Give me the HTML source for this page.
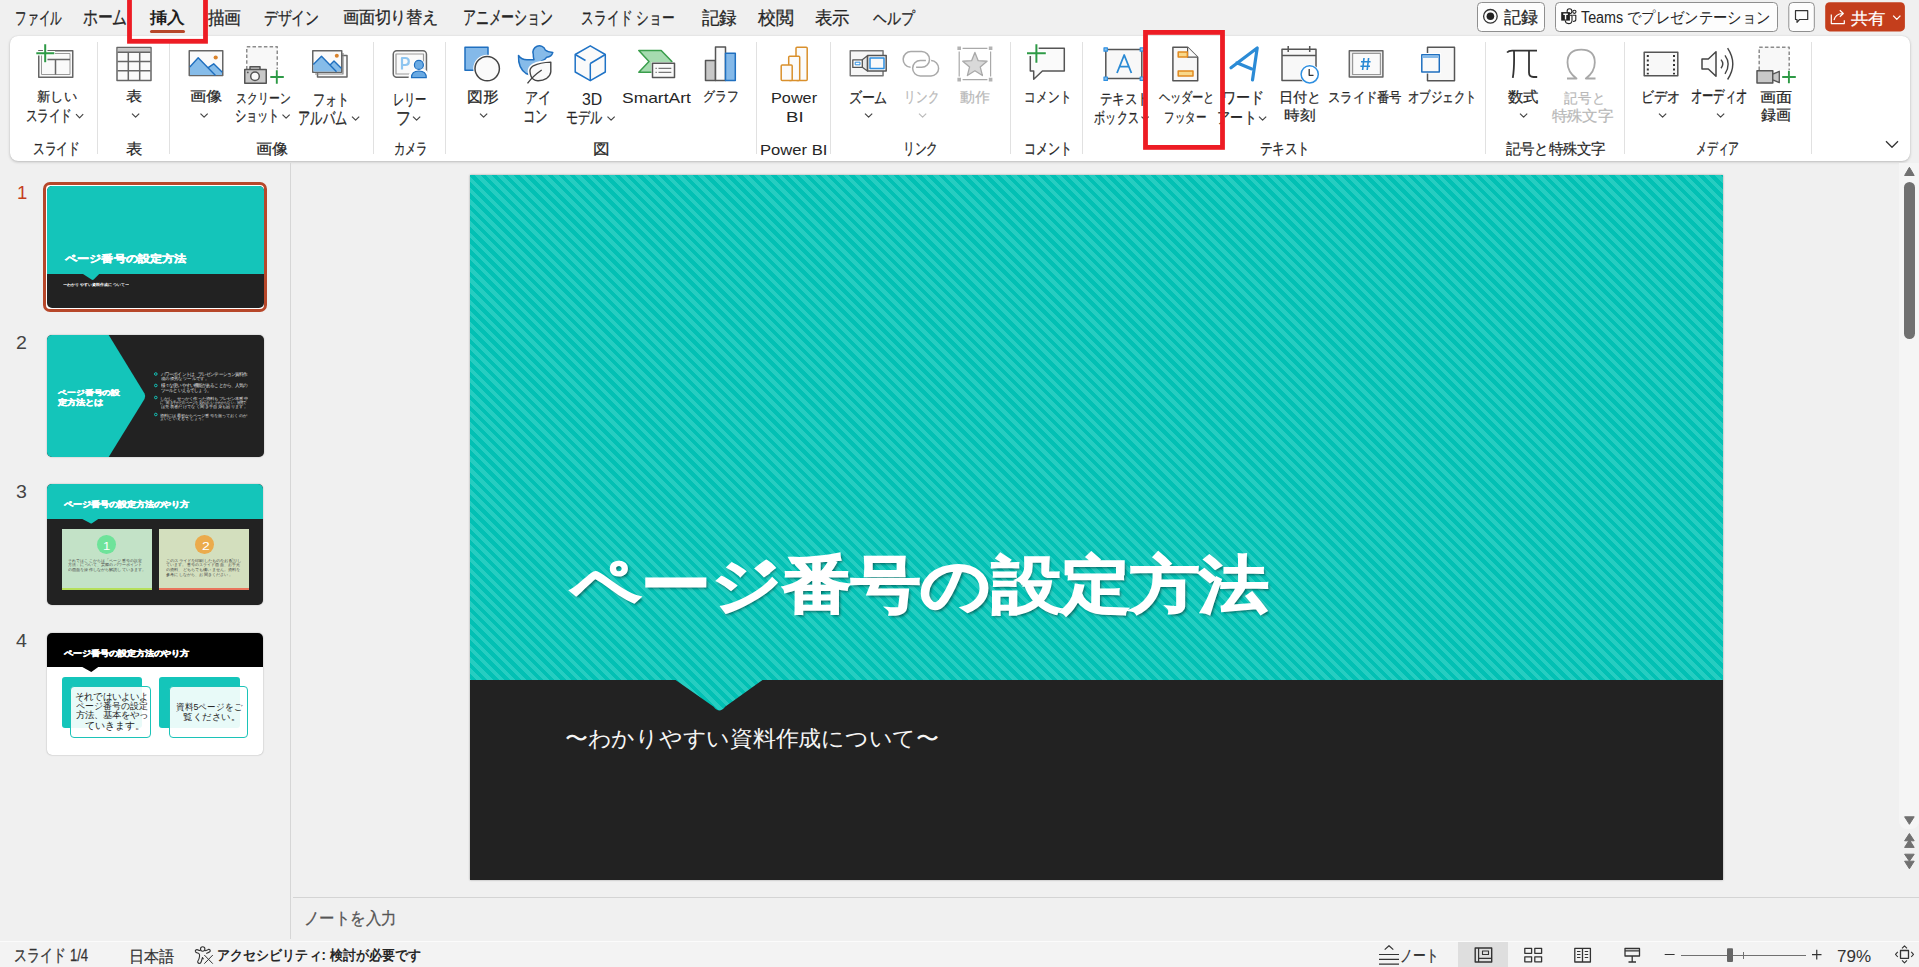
<!DOCTYPE html>
<html lang="ja"><head><meta charset="utf-8"><title>PowerPoint</title>
<style>
html,body{margin:0;padding:0;}
body{width:1919px;height:967px;overflow:hidden;background:#f0f0f0;position:relative;font-family:"Liberation Sans",sans-serif;}
.t{position:absolute;white-space:nowrap;line-height:1;transform-origin:0 0;}
.u{-webkit-text-stroke:0.25px currentColor;}
.a{position:absolute;}
svg.a{overflow:visible;}
</style></head><body>
<!-- ribbon panel -->
<div class="a" style="left:10px;top:36px;width:1900px;height:125px;background:#fff;border-radius:8px;box-shadow:0 1px 3px rgba(0,0,0,.22),0 0 1px rgba(0,0,0,.12);"></div>
<!-- tab underline -->
<div class="a" style="left:150px;top:30px;width:35px;height:3px;border-radius:2px;background:#b7472a;"></div>
<!-- ribbon separators -->
<div class="a" style="left:97px;top:42px;width:1px;height:112px;background:#e1e1e1;"></div><div class="a" style="left:169px;top:42px;width:1px;height:112px;background:#e1e1e1;"></div><div class="a" style="left:373px;top:42px;width:1px;height:112px;background:#e1e1e1;"></div><div class="a" style="left:445px;top:42px;width:1px;height:112px;background:#e1e1e1;"></div><div class="a" style="left:756px;top:42px;width:1px;height:112px;background:#e1e1e1;"></div><div class="a" style="left:830px;top:42px;width:1px;height:112px;background:#e1e1e1;"></div><div class="a" style="left:1010px;top:42px;width:1px;height:112px;background:#e1e1e1;"></div><div class="a" style="left:1082px;top:42px;width:1px;height:112px;background:#e1e1e1;"></div><div class="a" style="left:1485px;top:42px;width:1px;height:112px;background:#e1e1e1;"></div><div class="a" style="left:1624px;top:42px;width:1px;height:112px;background:#e1e1e1;"></div><div class="a" style="left:1811px;top:42px;width:1px;height:112px;background:#e1e1e1;"></div>
<!-- left pane separator -->
<div class="a" style="left:290px;top:163px;width:1px;height:776px;background:#d6d6d6;"></div>
<!-- notes separator -->
<div class="a" style="left:293px;top:897px;width:1626px;height:1px;background:#d4d4d4;"></div>
<!-- status bar -->
<div class="a" style="left:0;top:941px;width:1919px;height:1px;background:#fbfbfb;"></div>
<div class="a" style="left:0;top:942px;width:1919px;height:25px;background:#f3f3f3;"></div>
<div class="a" style="left:1458px;top:942px;width:50px;height:25px;background:#dedede;"></div>
<!-- scrollbar track -->
<div class="a" style="left:1899px;top:163px;width:20px;height:666px;background:#f5f5f5;border-radius:0 0 8px 8px;"></div>
<div class="a" style="left:1904px;top:182px;width:10.5px;height:156.5px;background:#707070;border-radius:6px;"></div>
<!-- main slide -->
<div class="a" style="left:470px;top:175px;width:1253px;height:705px;box-shadow:0 0 2px rgba(0,0,0,.35);background:repeating-linear-gradient(45deg,#02c0b4 0px,#02c0b4 3.95px,#26cdc1 3.95px,#26cdc1 7.9px);"></div>
<svg class="a" style="left:470px;top:175px" width="1253" height="705" viewBox="0 0 1253 705">
<path d="M0,505 H205.6 L243.7,531.8 Q249.4,539.4 255.1,531.8 L292.5,505 H1253 V705 H0 Z" fill="#222222"/>
</svg>
<!-- thumb 1 selected -->
<div class="a" style="left:43px;top:182px;width:218px;height:124px;border:3px solid #b7472a;border-radius:7px;background:#fff;"></div>
<div class="a" style="left:46.5px;top:185.5px;width:217px;height:122.5px;border-radius:5px;overflow:hidden;background:#222;">
  <div class="a" style="left:0;top:0;width:217px;height:88.4px;background:#14c5ba;"></div>
  <svg class="a" style="left:0;top:0" width="217" height="122"><path d="M36,88 L44.5,93.6 Q45.6,94.3 46.7,93.6 L52.2,88 Z" fill="#14c5ba"/></svg>
</div>
<!-- thumb 2 -->
<div class="a" style="left:46.5px;top:335px;width:217px;height:122px;border-radius:5px;overflow:hidden;background:#222;box-shadow:0 0 1.5px rgba(0,0,0,.35);">
  <svg class="a" style="left:0;top:0" width="217" height="122"><path d="M0,0 H61.7 L97.5,58.5 Q99,61.2 97.5,63.9 L61.7,122 H0 Z" fill="#14c5ba"/>
  <g fill="none" stroke="#14c5ba" stroke-width="1"><circle cx="108.8" cy="39" r="1.3"/><circle cx="108.8" cy="50.5" r="1.3"/><circle cx="108.8" cy="62.5" r="1.3"/><circle cx="108.8" cy="79.5" r="1.3"/></g></svg>
</div>
<!-- thumb 3 -->
<div class="a" style="left:46.9px;top:483.8px;width:216.1px;height:121.7px;border-radius:5px;overflow:hidden;background:#222;box-shadow:0 0 1.5px rgba(0,0,0,.35);">
  <div class="a" style="left:0;top:0;width:217px;height:35.1px;background:#14c5ba;"></div>
  <svg class="a" style="left:0;top:0" width="217" height="122"><path d="M35.3,35 L43.4,39.3 Q44.2,39.9 45,39.3 L51.3,35 Z" fill="#14c5ba"/></svg>
  <div class="a" style="left:15px;top:45.2px;width:90px;height:61.2px;background:#c3e2c7;"></div>
  <div class="a" style="left:15px;top:104.4px;width:90px;height:2px;background:#b5df5a;"></div>
  <div class="a" style="left:111.9px;top:45.2px;width:90.1px;height:61.2px;background:#d3dfbe;"></div>
  <div class="a" style="left:111.9px;top:104.4px;width:90.1px;height:2px;background:#e9745b;"></div>
  <div class="a" style="left:50.2px;top:51.3px;width:18.8px;height:18.8px;border-radius:50%;background:#6ee39a;"></div>
  <div class="a" style="left:148.2px;top:51.3px;width:18.8px;height:18.8px;border-radius:50%;background:#ebab4c;"></div>
</div>
<!-- thumb 4 -->
<div class="a" style="left:46.9px;top:632.8px;width:216.1px;height:122.4px;border-radius:5px;overflow:hidden;background:#fff;box-shadow:0 0 1.5px rgba(0,0,0,.4);">
  <div class="a" style="left:0;top:0;width:217px;height:34.1px;background:#000;"></div>
  <svg class="a" style="left:0;top:0" width="217" height="122"><path d="M35.3,34 L43.4,38.6 Q44.2,39.2 45,38.6 L51.3,34 Z" fill="#000"/></svg>
  <div class="a" style="left:15.3px;top:44.4px;width:79.6px;height:50.9px;border-radius:3px;background:#14c5ba;"></div>
  <div class="a" style="left:23.6px;top:53.5px;width:79px;height:49.5px;border-radius:4px;border:1px solid #1cc3b8;background:rgba(255,255,255,.9);"></div>
  <div class="a" style="left:112.3px;top:44.4px;width:80.6px;height:50.9px;border-radius:3px;background:#14c5ba;"></div>
  <div class="a" style="left:121.7px;top:53.5px;width:77.9px;height:49.5px;border-radius:4px;border:1px solid #1cc3b8;background:rgba(255,255,255,.9);"></div>
</div>

<svg class="a" style="left:0;top:0" width="1919" height="967" viewBox="0 0 1919 967">
<g fill="none" stroke-linejoin="round">
<!-- 1 new slide -->
<rect x="38.75" y="50.75" width="34" height="26.5" fill="#fafafa" stroke="#666" stroke-width="1.5"/>
<rect x="41.5" y="53.5" width="28.5" height="21" stroke="#999" stroke-width="1"/>
<path d="M45,59.5 H70 M55.5,59.5 V74.5" stroke="#666" stroke-width="1.5"/>
<path d="M45.2,43.5 V63 M35.5,53.2 H55" stroke="#fff" stroke-width="4.5"/>
<path d="M45.2,44.3 V62.3 M36.3,53.2 H54.3" stroke="#2e9a46" stroke-width="2"/>
<!-- 2 table -->
<rect x="117" y="47.5" width="34" height="33" fill="#fafafa" stroke="#666" stroke-width="1.5"/>
<rect x="117.75" y="48.25" width="32.5" height="4" fill="#c6c6c6"/>
<path d="M128.3,52.3 V80.5 M139.7,52.3 V80.5 M117.5,52.3 H150.5 M117.5,61.5 H150.5 M117.5,70.8 H150.5" stroke="#666" stroke-width="1.5"/>
<!-- 3 picture -->
<rect x="189.25" y="50.85" width="33.5" height="24.7" fill="#fafafa" stroke="#666" stroke-width="1.5"/>
<path d="M190,75 V67 L198.2,57.8 L207.5,67.8 L213.7,63.8 L222,72 V75 Z" fill="#86bce9"/>
<path d="M189.8,67 L198.2,57.8 L215.5,75.5 M207.8,67.8 L213.7,63.8 L222.3,72.3" stroke="#1f6fbf" stroke-width="1.4"/>
<circle cx="215.7" cy="57.5" r="2.1" fill="#d9822b"/>
<!-- 4 screenshot -->
<rect x="246.75" y="46.75" width="30.5" height="23" fill="#f8f8f8"/><path d="M246.75,69.5 V46.75 H277.25 V69.5" stroke="#8c8c8c" stroke-width="1.5" stroke-dasharray="3.5 2.2"/>
<path d="M250,69.5 V66.8 H260 V69.5" fill="#c8c8c8" stroke="#555" stroke-width="1.5"/>
<rect x="244.75" y="69.5" width="21.5" height="13.8" fill="#c8c8c8" stroke="#555" stroke-width="1.5"/>
<circle cx="255" cy="76.3" r="4.3" fill="#fafafa" stroke="#555" stroke-width="1.5"/>
<circle cx="247.8" cy="72.4" r="0.9" fill="#555"/>
<path d="M276.8,69.5 V84.5 M269.5,77 H284.5" stroke="#fff" stroke-width="4"/>
<path d="M276.8,70.3 V83.7 M270.3,77 H283.8" stroke="#2e9a46" stroke-width="1.9"/>
<!-- 5 photo album -->
<rect x="317.5" y="55.5" width="29.5" height="21.5" fill="#fafafa" stroke="#666" stroke-width="1.5"/>
<path d="M343,53 V74 H315" stroke="#888" stroke-width="1.2"/>
<rect x="312.75" y="50.75" width="29" height="21.5" fill="#fafafa" stroke="#666" stroke-width="1.5"/>
<path d="M313.5,71.5 V64.5 L321.5,56.3 L330,65 L334,61 L341,68 V71.5 Z" fill="#86bce9"/>
<path d="M313.3,64.5 L321.5,56.3 L336.5,71.8 M330,65 L334,61 L341.3,68.3" stroke="#1f6fbf" stroke-width="1.4"/>
<circle cx="336.8" cy="55.8" r="2" fill="#d9822b"/>
<!-- 6 cameo -->
<rect x="393.25" y="50.75" width="33.2" height="26.5" rx="3.5" fill="#fafafa" stroke="#666" stroke-width="1.5"/>
<rect x="396" y="54" width="27.5" height="20" stroke="#9a9a9a" stroke-width="1.2"/>
<path d="M402,69.6 V58 H405.3 Q408.8,58 408.8,61.5 Q408.8,65 405.3,65 H402" stroke="#8ec5f0" stroke-width="2.2"/>
<path d="M410,78.5 Q410,69.5 418.9,69.5 Q427.8,69.5 427.8,78.5" fill="#fff" stroke="#fff" stroke-width="3"/>
<circle cx="418.9" cy="64.9" r="6" fill="#fff"/>
<circle cx="418.9" cy="64.9" r="4.5" fill="#6aaae3" stroke="#1f6fbf" stroke-width="1.2"/>
<path d="M411.5,77.7 Q411.5,71 418.9,71 Q426.3,71 426.3,77.7 Z" fill="#6aaae3" stroke="#1f6fbf" stroke-width="1.2"/>
<!-- 7 shapes -->
<rect x="465" y="47.25" width="23" height="23" fill="#84b9e9" stroke="#1f6fbf" stroke-width="1.5"/>
<circle cx="487.2" cy="68.6" r="12.2" fill="#fff" stroke="#fff" stroke-width="3.5"/>
<circle cx="487.2" cy="68.6" r="12.2" fill="#fafafa" stroke="#444" stroke-width="1.5"/>
<!-- 8 icons -->
<path d="M518.5,55.5 Q521.5,59.8 527,59.8 H534 Q533.2,57.5 533.3,54.5 A6.3,6.3 0 0 1 545.3,50 Q547.5,52 552.8,52.5 Q551.5,56.8 546.8,57.2 Q545,60.2 541.5,61 Q547,62.5 548,66 L540,75 Q532,76.5 526,73.5 Q518,68 518.5,55.5 Z" fill="#86bbe9" stroke="#1f6fbf" stroke-width="1.5"/>
<path d="M550.8,62.1 Q540,62.5 533.3,65.8 Q529.5,68.5 530,71.7 Q530.5,77 533.3,79.2 Q535.5,81 538.3,80.8 Q543,80.5 546.7,78.3 Q550.5,75.5 550.8,71.7 Z" fill="#fafafa" stroke="#fff" stroke-width="4.5"/>
<path d="M550.8,62.1 Q540,62.5 533.3,65.8 Q529.5,68.5 530,71.7 Q530.5,77 533.3,79.2 Q535.5,81 538.3,80.8 Q543,80.5 546.7,78.3 Q550.5,75.5 550.8,71.7 Z" fill="#fafafa" stroke="#444" stroke-width="1.4"/>
<path d="M527.5,83.3 Q533,76 541.7,70" stroke="#444" stroke-width="1.4"/>
<!-- 9 3D -->
<path d="M590.3,45.8 L605.3,54.5 V72 L590.3,80.7 L575.2,72 V54.5 Z" fill="#fafafa" stroke="#1f73c6" stroke-width="1.5"/>
<path d="M575.2,54.5 L585.5,60.5 M590.3,63.5 V80.7 M590.3,63.5 L605.3,54.5" stroke="#1f73c6" stroke-width="1.5"/>
<!-- 10 smartart -->
<path d="M638.8,50.5 H661.2 L671.9,61.5 L661.2,72.3 H638.8 L649,61.5 Z" fill="#a6dbb0" stroke="#3a9e4c" stroke-width="1.5"/>
<rect x="651.5" y="62.2" width="24" height="16.3" fill="#fff"/>
<rect x="652.5" y="63.2" width="22" height="14.3" fill="#fafafa" stroke="#555" stroke-width="1.5"/>
<path d="M655.5,68.3 H656.8 M655.5,72.3 H656.8 M658.5,68.3 H671.3 M658.5,72.3 H671.3" stroke="#777" stroke-width="1.3"/>
<!-- 11 chart -->
<rect x="705.5" y="60.5" width="10" height="20" fill="#c8c8c8" stroke="#555" stroke-width="1.5"/>
<rect x="715.5" y="47" width="10" height="33.5" fill="#fafafa" stroke="#555" stroke-width="1.5"/>
<rect x="725.5" y="53.3" width="9.8" height="27.2" fill="#84b9e9" stroke="#1f6fbf" stroke-width="1.5"/>
<!-- 12 power bi -->
<rect x="796" y="47.2" width="11.2" height="33.3" rx="1" fill="#fbfbfb" stroke="#d9902c" stroke-width="1.5"/>
<rect x="788.7" y="56.2" width="11" height="24.3" rx="1" fill="#fbfbfb" stroke="#d9902c" stroke-width="1.5"/>
<rect x="781.2" y="64.9" width="11" height="15.6" rx="1" fill="#fbfbfb" stroke="#d9902c" stroke-width="1.5"/>
<!-- 13 zoom -->
<rect x="850.25" y="50.75" width="32.8" height="25" fill="#f6f6f6" stroke="#777" stroke-width="1.5"/>
<path d="M862.3,59.8 L867.4,55.8 V71 L862.3,67.3 Z" fill="#e8e8e8" stroke="#555" stroke-width="1.2"/>
<rect x="852.8" y="59.8" width="9.5" height="7.6" fill="#fff" stroke="#555" stroke-width="1.3"/>
<rect x="855.2" y="62.2" width="4.8" height="2.6" stroke="#2e8fe0" stroke-width="1"/>
<rect x="867.6" y="55.6" width="18.6" height="15.4" fill="#fafafa" stroke="#555" stroke-width="1.5"/>
<rect x="870" y="58" width="14" height="10.6" stroke="#2e8fe0" stroke-width="1.5"/>
<!-- 14 link -->
<path d="M910.6,67.2 A7.8,7.8 0 0 1 911.3,51.6 H921.7 A7.8,7.8 0 0 1 921.7,67.2 H916.1" stroke="#a9a9a9" stroke-width="1.5"/>
<path d="M925.9,60.6 H920.3 A7.65,7.65 0 0 0 920.3,75.9 H930.8 A7.65,7.65 0 0 0 931.1,60.6" stroke="#a9a9a9" stroke-width="1.5"/>
<!-- 15 action -->
<path d="M962.6,48.3 H987.4 M962.6,79.6 H987.4 M959.2,51.6 V76.5 M990.6,51.6 V76.5" stroke="#a9a9a9" stroke-width="1.2"/>
<path d="M957.4,46.4 h3.6 v3.6 h-3.6 Z M988.8,46.4 h3.6 v3.6 h-3.6 Z M957.4,77.8 h3.6 v3.6 h-3.6 Z M988.8,77.8 h3.6 v3.6 h-3.6 Z" fill="#b3b3b3"/>
<path d="M974.90,52.40 L978.19,60.67 L987.07,61.24 L980.23,66.93 L982.42,75.56 L974.90,70.80 L967.38,75.56 L969.57,66.93 L962.73,61.24 L971.61,60.67 Z" fill="#d9d9d9" stroke="#a9a9a9" stroke-width="1.3"/>
<!-- 16 comment -->
<path d="M1030.3,56 V71 H1033.7 V79.2 L1042.4,71 H1064.3 V48.3 H1038" fill="#fafafa" stroke="#555" stroke-width="1.5"/>
<path d="M1036.4,43.5 V63.5 M1026.2,53.2 H1046.6" stroke="#fff" stroke-width="4.5"/>
<path d="M1036.4,44.3 V62.7 M1027,53.2 H1045.8" stroke="#2e9a46" stroke-width="2"/>
<!-- 17 textbox -->
<rect x="1105.8" y="49.6" width="36" height="29" fill="#f8f8f8" stroke="#555" stroke-width="1.5"/>
<path d="M1117,73 L1124.2,55 L1131.4,73 M1119.6,66.7 H1128.8" stroke="#2a8ad4" stroke-width="1.8"/>
<g fill="#8cc4f0" stroke="#2e8fe0" stroke-width="1.2"><rect x="1104" y="47.8" width="3.4" height="3.4"/><rect x="1140.2" y="47.8" width="3.4" height="3.4"/><rect x="1104" y="77" width="3.4" height="3.4"/><rect x="1140.2" y="77" width="3.4" height="3.4"/></g>
<!-- 18 header footer -->
<path d="M1172.9,47.3 H1187.6 L1197.7,57.2 V80.7 H1172.9 Z" fill="#f8f8f8" stroke="#555" stroke-width="1.5"/>
<path d="M1187.6,47.3 V57.2 H1197.7" fill="#fafafa" stroke="#555" stroke-width="1.2"/>
<rect x="1178.2" y="52" width="9.2" height="5" fill="#f8d88a" stroke="#e0891f" stroke-width="1.5"/>
<rect x="1178.2" y="70.9" width="14.8" height="5" fill="#f8d88a" stroke="#e0891f" stroke-width="1.5"/>
<!-- 19 wordart -->
<path d="M1231,67.8 L1257.2,48 L1252.5,80 M1236.8,62.8 L1251.2,68.8" stroke="#2b8bd6" stroke-width="3.2" stroke-linecap="round"/>
<!-- 20 date -->
<rect x="1282" y="49.2" width="34" height="31.2" fill="#f8f8f8" stroke="#555" stroke-width="1.5"/>
<path d="M1282,55.5 H1316 M1288.2,46 V52 M1309.7,46 V52" stroke="#555" stroke-width="1.5"/>
<circle cx="1309.7" cy="74.3" r="10" fill="#fff"/>
<circle cx="1309.7" cy="74.3" r="8.6" fill="#fff" stroke="#2e8fe0" stroke-width="1.5"/>
<path d="M1309.2,69 V75.3 H1313.5" stroke="#333" stroke-width="1.3"/>
<!-- 21 slide number -->
<rect x="1349.3" y="50.8" width="33.6" height="26.2" fill="#eeeeee" stroke="#666" stroke-width="1.5"/>
<rect x="1352.6" y="53.3" width="27.8" height="21.2" fill="#fafafa" stroke="#999" stroke-width="1.2"/>
<path d="M1364,58 L1362.6,70 M1368.6,58 L1367.2,70 M1361,61.8 H1370.6 M1360.4,66.2 H1370" stroke="#2a8ad4" stroke-width="1.6"/>
<!-- 22 object -->
<rect x="1427.5" y="47.2" width="27" height="33.5" fill="#f8f8f8" stroke="#555" stroke-width="1.5"/>
<rect x="1420" y="53" width="21" height="20.5" fill="#fff"/>
<rect x="1421.8" y="54.7" width="17.5" height="17.3" fill="#fafafa" stroke="#1f6fbf" stroke-width="1.5"/>
<rect x="1422.5" y="55.4" width="16" height="2.6" fill="#84b9e9"/>
<!-- 23 pi -->
<path d="M1507,52.5 Q1509,50.3 1513,50.6 H1537 M1514,51 Q1514.5,68 1512.8,77.8 M1529,51 V72.5 Q1529,77 1533.5,77 H1537.2" stroke="#333" stroke-width="1.8"/>
<!-- 24 omega -->
<path d="M1567,78.5 H1576.5 Q1567.5,72 1567.5,62.5 Q1567.5,49.6 1581.2,49.6 Q1594.8,49.6 1594.8,62.5 Q1594.8,72 1585.8,78.5 H1595.5" stroke="#a8a8a8" stroke-width="1.8"/>
<!-- 25 video -->
<rect x="1644.2" y="52.2" width="33.6" height="23.6" fill="#f8f8f8" stroke="#555" stroke-width="1.5"/>

<g fill="#333"><rect x="1646.8" y="55" width="2" height="2"/><rect x="1646.8" y="59.5" width="2" height="2"/><rect x="1646.8" y="64" width="2" height="2"/><rect x="1646.8" y="68.5" width="2" height="2"/><rect x="1646.8" y="72.8" width="2" height="1.6"/>
<rect x="1673" y="55" width="2" height="2"/><rect x="1673" y="59.5" width="2" height="2"/><rect x="1673" y="64" width="2" height="2"/><rect x="1673" y="68.5" width="2" height="2"/><rect x="1673" y="72.8" width="2" height="1.6"/></g>
<!-- 26 audio -->
<path d="M1702,59 H1708.3 L1716,51.8 V76.2 L1708.3,69 H1702 Z" fill="#fafafa" stroke="#444" stroke-width="1.5"/>
<path d="M1721,59.6 Q1724.6,63.8 1721,68.2 M1725,55.4 Q1731.4,64.2 1725,73.8 M1727.6,48.2 Q1738,64 1727.6,79.5" stroke="#444" stroke-width="1.4"/>
<!-- 27 screen recording -->
<rect x="1759.2" y="47.2" width="30" height="23" fill="#f8f8f8"/><path d="M1759.2,70 V47.2 H1789.2 V70" stroke="#8c8c8c" stroke-width="1.5" stroke-dasharray="3.5 2.2"/>
<rect x="1757" y="70.8" width="15.8" height="12.3" fill="#c8c8c8" stroke="#555" stroke-width="1.5"/>
<path d="M1772.8,74.2 L1779.3,71.3 V82.7 L1772.8,79.8 Z" fill="#c8c8c8" stroke="#555" stroke-width="1.3"/>
<path d="M1788.9,70 V84 M1781.5,77 H1796.5" stroke="#fff" stroke-width="4"/>
<path d="M1788.9,70.7 V83.3 M1782.2,77 H1795.8" stroke="#2e9a46" stroke-width="1.9"/>
<!-- chevrons -->
<g stroke="#444" stroke-width="1.2">
<path d="M76,114.2 l3.6,3.6 l3.6,-3.6"/>
<path d="M132,113.6 l3.6,3.6 l3.6,-3.6"/>
<path d="M200.5,113.6 l3.6,3.6 l3.6,-3.6"/>
<path d="M282.5,114.6 l3.6,3.6 l3.6,-3.6"/>
<path d="M352,116.6 l3.6,3.6 l3.6,-3.6"/>
<path d="M413,116.6 l3.6,3.6 l3.6,-3.6"/>
<path d="M480,113.6 l3.6,3.6 l3.6,-3.6"/>
<path d="M607.5,116.6 l3.6,3.6 l3.6,-3.6"/>
<path d="M865,113.6 l3.6,3.6 l3.6,-3.6"/>
<path d="M1141.5,116.6 l3.6,3.6 l3.6,-3.6"/>
<path d="M1259,116.6 l3.6,3.6 l3.6,-3.6"/>
<path d="M1520,113.6 l3.6,3.6 l3.6,-3.6"/>
<path d="M1659,113.6 l3.6,3.6 l3.6,-3.6"/>
<path d="M1717,113.6 l3.6,3.6 l3.6,-3.6"/>
<path d="M1886,141.2 l6,6 l6,-6" stroke="#333" stroke-width="1.3"/>
</g>
<path d="M919,113.6 l3.6,3.6 l3.6,-3.6" stroke="#bbb" stroke-width="1.2"/>
<!-- red boxes -->

<!-- top right buttons -->
<rect x="1477.5" y="2.5" width="67" height="29" rx="4" fill="#fdfdfd" stroke="#8f8f8f" stroke-width="1"/>
<circle cx="1490.4" cy="16.3" r="6.8" stroke="#333" stroke-width="1.3"/>
<circle cx="1490.4" cy="16.3" r="3.8" fill="#222"/>
<rect x="1555.5" y="2.5" width="222" height="29" rx="4" fill="#fdfdfd" stroke="#8f8f8f" stroke-width="1"/>
<circle cx="1574.4" cy="11.8" r="1.6" stroke="#222" stroke-width="1.1"/>
<circle cx="1569.5" cy="11.2" r="2.4" stroke="#222" stroke-width="1.1"/>
<path d="M1572.5,15.3 H1575.8 V19.8 Q1575.8,21.5 1573,21.5" stroke="#222" stroke-width="1.1"/>
<path d="M1565.2,20.5 Q1565.5,23.6 1568.5,23.6 Q1572,23.6 1572,20.5 V15.3 H1569.9" stroke="#222" stroke-width="1.1"/>
<rect x="1561.2" y="12.1" width="8.7" height="8.5" fill="#222"/>
<path d="M1563.3,14.3 H1567.8 M1565.55,14.3 V19.5" stroke="#fff" stroke-width="1.4"/>
<rect x="1788.8" y="2.5" width="25.5" height="29" rx="4" fill="#fdfdfd" stroke="#8f8f8f" stroke-width="1"/>
<path d="M1795.5,10.7 H1807.7 V19.5 H1799.5 L1797,22.3 V19.5 H1795.5 Z" stroke="#333" stroke-width="1.2"/>
<rect x="1825.2" y="2.3" width="79.7" height="29.1" rx="4.5" fill="#c43e1c"/>
<path d="M1831.3,14.5 V23.6 H1844.3 V20.2" stroke="#fff" stroke-width="1.2"/>
<path d="M1834,20 Q1835.5,13.8 1842.5,13.5 M1839.8,10.3 L1843.3,13.5 L1839.8,16.8" stroke="#fff" stroke-width="1.2"/>
<path d="M1893.2,15.6 l3.6,3.8 l3.6,-3.8" stroke="#fff" stroke-width="1.3"/>
<!-- scrollbar arrows -->
<g fill="#707070" stroke="#707070" stroke-width="1" stroke-linejoin="round">
<path d="M1909.4,167.3 L1914.2,175.5 H1904.6 Z"/>
<path d="M1904.6,816.8 H1914.2 L1909.4,824.3 Z"/>
<path d="M1909.4,833.5 L1914.2,840.8 H1904.6 Z M1909.4,839.8 L1914.2,847.4 H1904.6 Z"/>
<path d="M1904.6,854.2 H1914.2 L1909.4,861.2 Z M1904.6,861.2 H1914.2 L1909.4,868.8 Z"/>
</g>
<!-- status bar icons -->
<g stroke="#333" stroke-width="1.2">
<circle cx="202.7" cy="949" r="2.2" stroke-width="1.1"/>
<path d="M200.5,950.8 Q198,950.2 196.8,949.6 Q194.8,950 195.5,951.8 Q196.5,953 198.5,953.3 Q199.8,953.8 199.6,956 Q199.3,959 197.8,961.2 Q197.3,963 199.3,963.5 Q200.8,963.4 201.3,961.5 L202.5,957.5 L203.5,959.3 M205,950.8 Q207,950.4 208.5,949.4 Q210.5,949.2 210.2,951.3 Q209.8,952.2 206.2,953.5" stroke-width="1.1"/>
<path d="M204.3,955 L212.8,963.7 M212.8,955 L204.3,963.7" stroke-width="1"/>
<path d="M1384.7,949.6 L1389,945.7 L1393.3,949.6 M1379,954.5 H1399 M1379,959.3 H1399 M1379,964.2 H1399"/>
<rect x="1475.2" y="948" width="16.5" height="14" stroke-width="1.4"/>
<path d="M1478.6,948 V962 M1478.6,958.3 H1491.7" stroke-width="1.2"/>
<rect x="1482.5" y="951" width="6" height="3.5" stroke-width="1.1"/>
<rect x="1524.8" y="948.3" width="6.8" height="5" stroke-width="1.3"/><rect x="1534.8" y="948.3" width="6.8" height="5" stroke-width="1.3"/>
<rect x="1524.8" y="956.8" width="6.8" height="5" stroke-width="1.3"/><rect x="1534.8" y="956.8" width="6.8" height="5" stroke-width="1.3"/>
<path d="M1574.8,948.3 H1582.5 V962 H1574.8 Z M1582.5,948.3 H1590.4 V962 H1582.5 Z" stroke-width="1.3"/>
<path d="M1577,951.5 H1580.5 M1577,954.5 H1580.5 M1577,957.5 H1580.5 M1584.7,951.5 H1588.2 M1584.7,954.5 H1588.2 M1584.7,957.5 H1588.2" stroke-width="1"/>
<rect x="1625" y="948.5" width="14.5" height="7.5" stroke-width="1.3"/>
<path d="M1625,950.8 H1639.5 M1632.2,956 V961.5 M1628.5,962 H1636" stroke-width="1.3"/>
<path d="M1664.7,954.5 H1674.6 M1812,954.6 H1821.5 M1816.75,949.8 V959.5"/>
<path d="M1681,955.5 H1806" stroke="#707070" stroke-width="1.1"/>
<path d="M1743.5,952 V959" stroke="#707070" stroke-width="1"/>
<rect x="1900.5" y="950.5" width="8" height="7.8" stroke-width="1.3"/>
<path d="M1902,948.3 L1904.5,945.8 L1907,948.3 M1902,960.4 L1904.5,962.9 L1907,960.4 M1897.8,951.8 L1895.5,954.4 L1897.8,957 M1911.2,951.8 L1913.5,954.4 L1911.2,957" stroke-width="1.1"/>
</g>
<rect x="1727" y="948.2" width="6" height="13.8" rx="1" fill="#666"/>
</g>
</svg>

<div class="t u" style="left:14.76px;top:8.86px;font-size:16px;font-weight:400;color:#262626;transform:scale(0.7381,1.1429);">ファイル</div><div class="t u" style="left:83.09px;top:7.54px;font-size:16px;font-weight:400;color:#262626;transform:scale(0.9130,1.2308);">ホーム</div><div class="t" style="left:150.00px;top:10.47px;font-size:16px;font-weight:700;color:#1f1f1f;transform:scale(1.0625,0.9706);">挿入</div><div class="t u" style="left:208.00px;top:9.50px;font-size:16px;font-weight:400;color:#262626;transform:scale(1.0312,1.1000);">描画</div><div class="t u" style="left:264.15px;top:9.50px;font-size:16px;font-weight:400;color:#262626;transform:scale(0.8548,1.1000);">デザイン</div><div class="t u" style="left:343.01px;top:9.50px;font-size:16px;font-weight:400;color:#262626;transform:scale(0.9894,1.0312);">画面切り替え</div><div class="t u" style="left:463.20px;top:7.54px;font-size:16px;font-weight:400;color:#262626;transform:scale(0.8000,1.2308);">アニメーション</div><div class="t u" style="left:580.89px;top:8.86px;font-size:16px;font-weight:400;color:#262626;transform:scale(0.8053,1.1429);">スライド ショー</div><div class="t u" style="left:701.70px;top:9.50px;font-size:16px;font-weight:400;color:#262626;transform:scale(1.0719,1.1000);">記録</div><div class="t u" style="left:758.00px;top:9.50px;font-size:16px;font-weight:400;color:#262626;transform:scale(1.0968,1.1000);">校閲</div><div class="t u" style="left:815.00px;top:9.50px;font-size:16px;font-weight:400;color:#262626;transform:scale(1.0625,1.1000);">表示</div><div class="t u" style="left:872.50px;top:10.06px;font-size:16px;font-weight:400;color:#262626;transform:scale(0.8673,1.0625);">ヘルプ</div><div class="t u" style="left:36.90px;top:90.40px;font-size:16px;font-weight:400;color:#262626;transform:scale(0.8362,0.8187);">新しい</div><div class="t u" style="left:26.09px;top:108.32px;font-size:16px;font-weight:400;color:#262626;transform:scale(0.7115,0.9786);">スライド</div><div class="t u" style="left:33.48px;top:141.21px;font-size:16px;font-weight:400;color:#262626;transform:scale(0.7213,0.9857);">スライド</div><div class="t u" style="left:126.30px;top:90.40px;font-size:16px;font-weight:400;color:#262626;transform:scale(1.0067,0.8733);">表</div><div class="t u" style="left:126.30px;top:142.20px;font-size:16px;font-weight:400;color:#262626;transform:scale(1.0067,0.9200);">表</div><div class="t u" style="left:190.48px;top:90.40px;font-size:16px;font-weight:400;color:#262626;transform:scale(1.0167,0.8733);">画像</div><div class="t u" style="left:236.02px;top:90.91px;font-size:16px;font-weight:400;color:#262626;transform:scale(0.6833,0.8857);">スクリーン</div><div class="t u" style="left:235.32px;top:108.32px;font-size:16px;font-weight:400;color:#262626;transform:scale(0.6897,0.9786);">ショット</div><div class="t u" style="left:313.26px;top:91.52px;font-size:16px;font-weight:400;color:#262626;transform:scale(0.7442,0.9786);">フォト</div><div class="t u" style="left:297.72px;top:109.02px;font-size:16px;font-weight:400;color:#262626;transform:scale(0.7758,1.1417);">アルバム</div><div class="t u" style="left:256.01px;top:142.20px;font-size:16px;font-weight:400;color:#262626;transform:scale(0.9933,0.9200);">画像</div><div class="t u" style="left:393.31px;top:91.52px;font-size:16px;font-weight:400;color:#262626;transform:scale(0.6956,0.9786);">レリー</div><div class="t u" style="left:396.45px;top:109.02px;font-size:16px;font-weight:400;color:#262626;transform:scale(0.9538,1.1417);">フ</div><div class="t u" style="left:394.00px;top:141.21px;font-size:16px;font-weight:400;color:#262626;transform:scale(0.6956,0.9857);">カメラ</div><div class="t u" style="left:466.60px;top:89.80px;font-size:16px;font-weight:400;color:#262626;transform:scale(0.9967,0.9438);">図形</div><div class="t u" style="left:524.60px;top:89.52px;font-size:16px;font-weight:400;color:#262626;transform:scale(0.8036,0.9786);">アイ</div><div class="t u" style="left:523.20px;top:108.53px;font-size:16px;font-weight:400;color:#262626;transform:scale(0.7517,1.0333);">コン</div><div class="t" style="left:581.80px;top:92.12px;font-size:16px;font-weight:400;color:#262626;transform:scale(0.9900,0.9833);">3D</div><div class="t u" style="left:565.65px;top:109.19px;font-size:16px;font-weight:400;color:#262626;transform:scale(0.7489,1.0538);">モデル</div><div class="t" style="left:622.31px;top:90.88px;font-size:16px;font-weight:400;color:#262626;transform:scale(1.0903,0.9250);">SmartArt</div><div class="t u" style="left:703.32px;top:90.40px;font-size:16px;font-weight:400;color:#262626;transform:scale(0.7409,0.8733);">グラフ</div><div class="t u" style="left:592.97px;top:142.20px;font-size:16px;font-weight:400;color:#262626;transform:scale(1.0286,0.9200);">図</div><div class="t" style="left:770.98px;top:90.88px;font-size:16px;font-weight:400;color:#262626;transform:scale(1.0159,0.9250);">Power</div><div class="t" style="left:785.64px;top:109.67px;font-size:16px;font-weight:400;color:#262626;transform:scale(1.1615,0.9250);">BI</div><div class="t" style="left:759.56px;top:142.68px;font-size:16px;font-weight:400;color:#262626;transform:scale(1.0381,0.9167);">Power BI</div><div class="t u" style="left:848.71px;top:89.80px;font-size:16px;font-weight:400;color:#262626;transform:scale(0.7935,0.9786);">ズーム</div><div class="t u" style="left:903.77px;top:89.04px;font-size:16px;font-weight:400;color:#b8b8b8;transform:scale(0.7429,0.9643);">リンク</div><div class="t u" style="left:960.40px;top:90.00px;font-size:16px;font-weight:400;color:#b8b8b8;transform:scale(0.9563,0.9000);">動作</div><div class="t u" style="left:903.11px;top:141.21px;font-size:16px;font-weight:400;color:#262626;transform:scale(0.7286,0.9857);">リンク</div><div class="t u" style="left:1024.10px;top:89.04px;font-size:16px;font-weight:400;color:#262626;transform:scale(0.7483,0.9643);">コメント</div><div class="t u" style="left:1024.10px;top:141.21px;font-size:16px;font-weight:400;color:#262626;transform:scale(0.7483,0.9857);">コメント</div><div class="t u" style="left:1100.22px;top:91.56px;font-size:16px;font-weight:400;color:#262626;transform:scale(0.7797,0.9357);">テキスト</div><div class="t u" style="left:1094.19px;top:109.57px;font-size:16px;font-weight:400;color:#262626;transform:scale(0.7098,1.0286);">ボックス</div><div class="t u" style="left:1159.40px;top:90.50px;font-size:16px;font-weight:400;color:#262626;transform:scale(0.6935,0.8563);">ヘッダーと</div><div class="t u" style="left:1164.13px;top:109.71px;font-size:16px;font-weight:400;color:#262626;transform:scale(0.6661,0.8857);">フッター</div><div class="t u" style="left:1222.27px;top:89.52px;font-size:16px;font-weight:400;color:#262626;transform:scale(0.8636,0.9786);">ワード</div><div class="t u" style="left:1217.17px;top:109.57px;font-size:16px;font-weight:400;color:#262626;transform:scale(0.8326,1.0286);">アート</div><div class="t u" style="left:1279.04px;top:90.50px;font-size:16px;font-weight:400;color:#262626;transform:scale(0.8814,0.8667);">日付と</div><div class="t u" style="left:1283.83px;top:109.30px;font-size:16px;font-weight:400;color:#262626;transform:scale(0.9733,0.8733);">時刻</div><div class="t u" style="left:1328.43px;top:90.50px;font-size:16px;font-weight:400;color:#262626;transform:scale(0.7663,0.8667);">スライド番号</div><div class="t u" style="left:1408.39px;top:90.00px;font-size:16px;font-weight:400;color:#262626;transform:scale(0.7132,0.9333);">オブジェクト</div><div class="t u" style="left:1260.13px;top:141.21px;font-size:16px;font-weight:400;color:#262626;transform:scale(0.7746,0.9857);">テキスト</div><div class="t u" style="left:1507.60px;top:89.80px;font-size:16px;font-weight:400;color:#262626;transform:scale(0.9344,0.9133);">数式</div><div class="t u" style="left:1564.00px;top:90.50px;font-size:16px;font-weight:400;color:#b8b8b8;transform:scale(0.8600,0.9000);">記号と</div><div class="t u" style="left:1552.00px;top:109.30px;font-size:16px;font-weight:400;color:#b8b8b8;transform:scale(0.9524,0.9133);">特殊文字</div><div class="t u" style="left:1505.50px;top:142.20px;font-size:16px;font-weight:400;color:#262626;transform:scale(0.8874,0.9200);">記号と特殊文字</div><div class="t u" style="left:1640.94px;top:90.00px;font-size:16px;font-weight:400;color:#262626;transform:scale(0.8186,0.9333);">ビデオ</div><div class="t u" style="left:1690.70px;top:87.58px;font-size:16px;font-weight:400;color:#262626;transform:scale(0.7026,1.1077);">オーディオ</div><div class="t u" style="left:1760.30px;top:90.50px;font-size:16px;font-weight:400;color:#262626;transform:scale(0.9967,0.8667);">画面</div><div class="t u" style="left:1761.30px;top:108.36px;font-size:16px;font-weight:400;color:#262626;transform:scale(0.9344,0.9357);">録画</div><div class="t u" style="left:1696.15px;top:140.08px;font-size:16px;font-weight:400;color:#262626;transform:scale(0.6770,1.0615);">メディア</div><div class="t u" style="left:1503.80px;top:9.40px;font-size:16px;font-weight:400;color:#262626;transform:scale(1.0656,1.0667);">記録</div><div class="t" style="left:1581.30px;top:10.40px;font-size:16px;font-weight:400;color:#262626;transform:scale(0.8943,1.0000);">Teams でプレゼンテーション</div><div class="t u" style="left:1851.30px;top:10.80px;font-size:16px;font-weight:400;color:#ffffff;transform:scale(1.0656,0.9800);">共有</div><div class="t" style="left:16.54px;top:183.83px;font-size:16px;font-weight:400;color:#c43e1c;transform:scale(1.1625,1.1667);">1</div><div class="t" style="left:16.00px;top:333.83px;font-size:16px;font-weight:400;color:#444444;transform:scale(1.2222,1.1667);">2</div><div class="t" style="left:16.00px;top:482.83px;font-size:16px;font-weight:400;color:#444444;transform:scale(1.2222,1.1667);">3</div><div class="t" style="left:16.00px;top:631.83px;font-size:16px;font-weight:400;color:#444444;transform:scale(1.2222,1.1667);">4</div><div class="t u" style="left:303.58px;top:909.50px;font-size:16px;font-weight:400;color:#555555;transform:scale(0.9620,1.0625);">ノートを入力</div><div class="t u" style="left:14.18px;top:946.93px;font-size:16px;font-weight:400;color:#333333;transform:scale(0.8167,1.0714);">スライド 1/4</div><div class="t u" style="left:128.71px;top:948.50px;font-size:16px;font-weight:400;color:#333333;transform:scale(0.9457,1.0000);">日本語</div><div class="t" style="left:216.68px;top:948.88px;font-size:16px;font-weight:700;color:#262626;transform:scale(0.8173,0.8824);">アクセシビリティ: 検討が必要です</div><div class="t u" style="left:1399.99px;top:947.89px;font-size:16px;font-weight:400;color:#333333;transform:scale(0.8048,1.0071);">ノート</div><div class="t" style="left:1837.34px;top:948.44px;font-size:16px;font-weight:400;color:#333333;transform:scale(1.0645,1.0583);">79%</div><div class="t" style="left:570.22px;top:553.57px;font-size:72px;font-weight:700;color:#ffffff;transform:scale(0.9625,0.8571);-webkit-text-stroke:1.8px #fff;text-shadow:2px 2px 3px rgba(0,0,0,.45);">ページ番号の設定方法</div><div class="t" style="left:564.65px;top:727.50px;font-size:24px;font-weight:400;color:#f5f5f5;transform:scale(0.9487,0.9083);">〜わかりやすい資料作成について〜</div><div class="t" style="left:64.57px;top:253.31px;font-size:14px;font-weight:700;color:#ffffff;transform:scale(0.8683,0.7125);-webkit-text-stroke:0.6px #fff;">ページ番号の設定方法</div><div class="t" style="left:63.00px;top:282.30px;font-size:6px;font-weight:700;color:#ffffff;transform:scale(0.6875,0.7000);">〜わかりやすい資料作成について〜</div><div class="t" style="left:58.39px;top:389.41px;font-size:10px;font-weight:700;color:#ffffff;transform:scale(0.8889,0.7091);-webkit-text-stroke:0.6px #fff;">ページ番号の設</div><div class="t" style="left:58.39px;top:398.97px;font-size:10px;font-weight:700;color:#ffffff;transform:scale(0.8922,0.7727);-webkit-text-stroke:0.6px #fff;">定方法とは</div><div class="t" style="left:160.70px;top:373.06px;font-size:8px;font-weight:400;color:#e0e0e0;transform:scale(0.5137,0.5625);">パワーポイントは、プレゼンテーション資料作</div><div class="t" style="left:160.70px;top:377.00px;font-size:8px;font-weight:400;color:#e0e0e0;transform:scale(0.5458,0.5000);">成の優秀なツールです。</div><div class="t" style="left:160.70px;top:384.00px;font-size:8px;font-weight:400;color:#e0e0e0;transform:scale(0.5137,0.5625);">様々な使いやすい機能があることから、人気の</div><div class="t" style="left:160.70px;top:388.30px;font-size:8px;font-weight:400;color:#e0e0e0;transform:scale(0.5198,0.5875);">ツールといえるでしょう。</div><div class="t" style="left:159.65px;top:396.68px;font-size:8px;font-weight:400;color:#e0e0e0;transform:scale(0.5230,0.4778);">しかし、せっかく作った資料もプレゼン本番中</div><div class="t" style="left:160.30px;top:400.79px;font-size:8px;font-weight:400;color:#e0e0e0;transform:scale(0.4014,0.4889);">に「聞き手がどのページを見ればいいかわからない」状態で</div><div class="t" style="left:160.70px;top:405.32px;font-size:8px;font-weight:400;color:#e0e0e0;transform:scale(0.5439,0.5222);">は発表者だけでなく聞き手自身も困ります。</div><div class="t" style="left:160.18px;top:413.50px;font-size:8px;font-weight:400;color:#e0e0e0;transform:scale(0.5168,0.5000);">資料には最初からページ番号を振っておくのが</div><div class="t" style="left:160.17px;top:417.20px;font-size:8px;font-weight:400;color:#e0e0e0;transform:scale(0.5280,0.5375);">よいといえるでしょう。</div><div class="t" style="left:64.40px;top:500.98px;font-size:10px;font-weight:700;color:#ffffff;transform:scale(0.8951,0.7818);-webkit-text-stroke:0.6px #fff;">ページ番号の設定方法のやり方</div><div class="t" style="left:103.00px;top:540.50px;font-size:10px;font-weight:400;color:#ffffff;transform:scale(1.3000,1.0625);">1</div><div class="t" style="left:201.50px;top:540.50px;font-size:10px;font-weight:400;color:#ffffff;transform:scale(1.4000,1.0625);">2</div><div class="t" style="left:67.89px;top:559.32px;font-size:8px;font-weight:400;color:#444444;transform:scale(0.5147,0.5250);">それではここからは「ページ番号の設定</div><div class="t" style="left:68.40px;top:563.32px;font-size:8px;font-weight:400;color:#444444;transform:scale(0.5183,0.5250);">方法」について、実際のパワーポイント</div><div class="t" style="left:68.40px;top:567.50px;font-size:8px;font-weight:400;color:#444444;transform:scale(0.5156,0.5000);">の画面を操作しながら解説していきます。</div><div class="t" style="left:165.78px;top:559.27px;font-size:8px;font-weight:400;color:#444444;transform:scale(0.5218,0.4667);">このスライドを印刷したものをお配りし</div><div class="t" style="left:166.30px;top:563.32px;font-size:8px;font-weight:400;color:#444444;transform:scale(0.5146,0.5250);">ています。番号のスライド画面、お手元</div><div class="t" style="left:166.30px;top:567.50px;font-size:8px;font-weight:400;color:#444444;transform:scale(0.5182,0.5000);">の資料、どちらでも構いません。資料を</div><div class="t" style="left:165.78px;top:572.52px;font-size:8px;font-weight:400;color:#444444;transform:scale(0.5221,0.5222);">参考にしながら、お聞きください。</div><div class="t" style="left:64.40px;top:649.98px;font-size:10px;font-weight:700;color:#ffffff;transform:scale(0.8951,0.7818);-webkit-text-stroke:0.6px #fff;">ページ番号の設定方法のやり方</div><div class="t" style="left:74.78px;top:691.83px;font-size:10px;font-weight:400;color:#222222;transform:scale(0.9169,0.9667);">それではいよいよ</div><div class="t" style="left:75.70px;top:701.50px;font-size:10px;font-weight:400;color:#222222;transform:scale(0.8937,0.9000);">ページ番号の設定</div><div class="t" style="left:75.70px;top:711.00px;font-size:10px;font-weight:400;color:#222222;transform:scale(0.8937,0.8500);">方法、基本をやっ</div><div class="t" style="left:84.50px;top:720.50px;font-size:10px;font-weight:400;color:#222222;transform:scale(1.0000,1.0000);">ていきます。</div><div class="t" style="left:175.70px;top:703.20px;font-size:10px;font-weight:400;color:#222222;transform:scale(0.8789,0.9300);">資料5ページをご</div><div class="t" style="left:183.00px;top:713.00px;font-size:10px;font-weight:400;color:#222222;transform:scale(0.9623,0.9200);">覧ください。</div>
<svg class="a" style="left:0;top:0" width="1919" height="967"><!-- redboxes --><g fill="none" stroke="#ed1c24" stroke-width="4.8"><rect x="129.5" y="-3" width="76" height="44.3"/><rect x="1145.5" y="32.4" width="77" height="115"/></g></svg>
</body></html>
